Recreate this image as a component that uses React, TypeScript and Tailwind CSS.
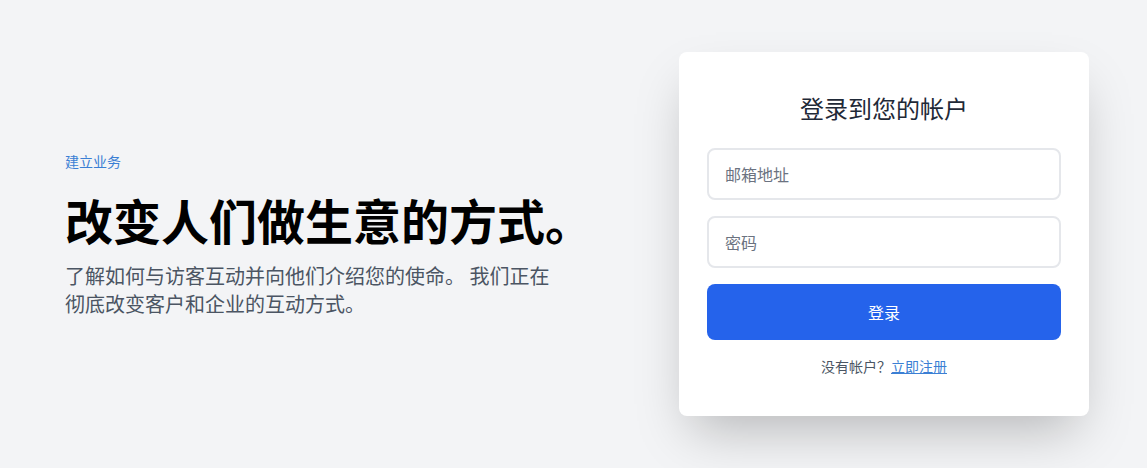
import React from "react";

export default function App() {
  return (
    <div
      className="w-full h-[468px] bg-[#f3f4f6] flex items-center justify-between pl-[65px] pr-[58px]"
      style={{ fontFamily: '"Noto Sans CJK SC", "Noto Sans", sans-serif' }}
    >
      <div className="flex flex-col">
        <p className="text-sm leading-5 text-[#3b7fd4]">建立业务</p>
        <h1 className="mt-6 text-5xl leading-none font-bold text-black">
          改变人们做生意的方式。
        </h1>
        <p className="mt-[19px] text-xl leading-7 text-[#4b5563] max-w-[495px]">
          了解如何与访客互动并向他们介绍您的使命。 我们正在彻底改变客户和企业的互动方式。
        </p>
      </div>
      <div className="w-[410px] bg-white rounded-lg shadow-[0_25px_50px_-12px_rgba(0,0,0,0.25)] px-7 pt-10 pb-10 flex flex-col">
        <h2 className="text-2xl leading-8 text-[#1f2937] text-center">登录到您的帐户</h2>
        <input
          type="email"
          placeholder="邮箱地址"
          className="mt-6 h-[52px] w-full rounded-lg border-2 border-[#e5e7eb] px-4 text-base text-gray-800 placeholder:text-[#6b7280] outline-none"
        />
        <input
          type="password"
          placeholder="密码"
          className="mt-4 h-[52px] w-full rounded-lg border-2 border-[#e5e7eb] px-4 text-base text-gray-800 placeholder:text-[#6b7280] outline-none"
        />
        <button className="mt-4 h-14 w-full rounded-lg bg-[#2563eb] text-white text-base">
          登录
        </button>
        <p className="mt-4 text-sm leading-5 text-[#4b5563] text-center">
          没有帐户？<a href="#" className="text-[#3b7fd4] underline">立即注册</a>
        </p>
      </div>
    </div>
  );
}
